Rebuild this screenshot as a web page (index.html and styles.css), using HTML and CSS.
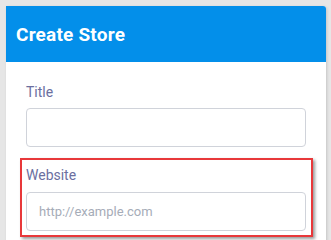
FILE: index.html
```html
<!DOCTYPE html>
<html lang="en">
<head>
    <meta charset="UTF-8">
    <meta name="viewport" content="width=device-width, initial-scale=1.0">
    <title>Create Store</title>
    <link rel="stylesheet" href="styles.css">
</head>
<body>
    <div class="card">
        <div class="card-header">
            <h1>Create Store</h1>
        </div>

        <form class="card-body">
            <div class="field">
                <label for="title">Title</label>
                <input id="title" type="text">
            </div>

            <!-- highlighted field -->
            <div class="field highlight">
                <label for="website">Website</label>
                <input id="website" type="text" placeholder="http://example.com">
            </div>
        </form>
    </div>
</body>
</html>
```

FILE: styles.css
```css
        body {
            margin: 0;
            padding: 6px 5px 0 6px;
            font-family: Roboto, "Liberation Sans", sans-serif;
            background-color: #e6e6e6;
        }

        .card {
            background-color: #fff;
            border-radius: 0 3px 0 0;
            box-shadow: 1px 1px 3px rgba(0, 0, 0, 0.15);
            min-height: 260px;
        }

        .card-header {
            background-color: #038fea;
            height: 56px;
            display: flex;
            align-items: center;
            padding: 0 10px;
            border-radius: 0 3px 0 0;
        }

        h1 {
            margin: 0;
            font-size: 19px;
            font-weight: bold;
            letter-spacing: 0.2px;
            color: #fff;
        }

        .card-body {
            padding: 20px 20px;
        }

        .field {
            margin-bottom: 11px;
        }

        label {
            display: block;
            font-size: 14px;
            line-height: 20px;
            color: #6b6f9f;
            margin-bottom: 6px;
        }

        input {
            display: block;
            box-sizing: border-box;
            width: 100%;
            height: 39px;
            margin: 0;
            padding: 0 12px;
            border: 1px solid #d0d3da;
            border-radius: 4px;
            font-family: inherit;
            font-size: 13px;
            color: #333;
            background: #fff;
        }

        input::placeholder {
            color: #a6acb8;
        }

        .highlight {
            margin: 0 -7px 0 -6px;
            padding: 5px 5px 4px 4px;
            border: 2px solid #e8383a;
            box-shadow: 2px 2px 3px rgba(0, 0, 0, 0.4);
        }

        .highlight label {
            margin-bottom: 7px;
        }
```
